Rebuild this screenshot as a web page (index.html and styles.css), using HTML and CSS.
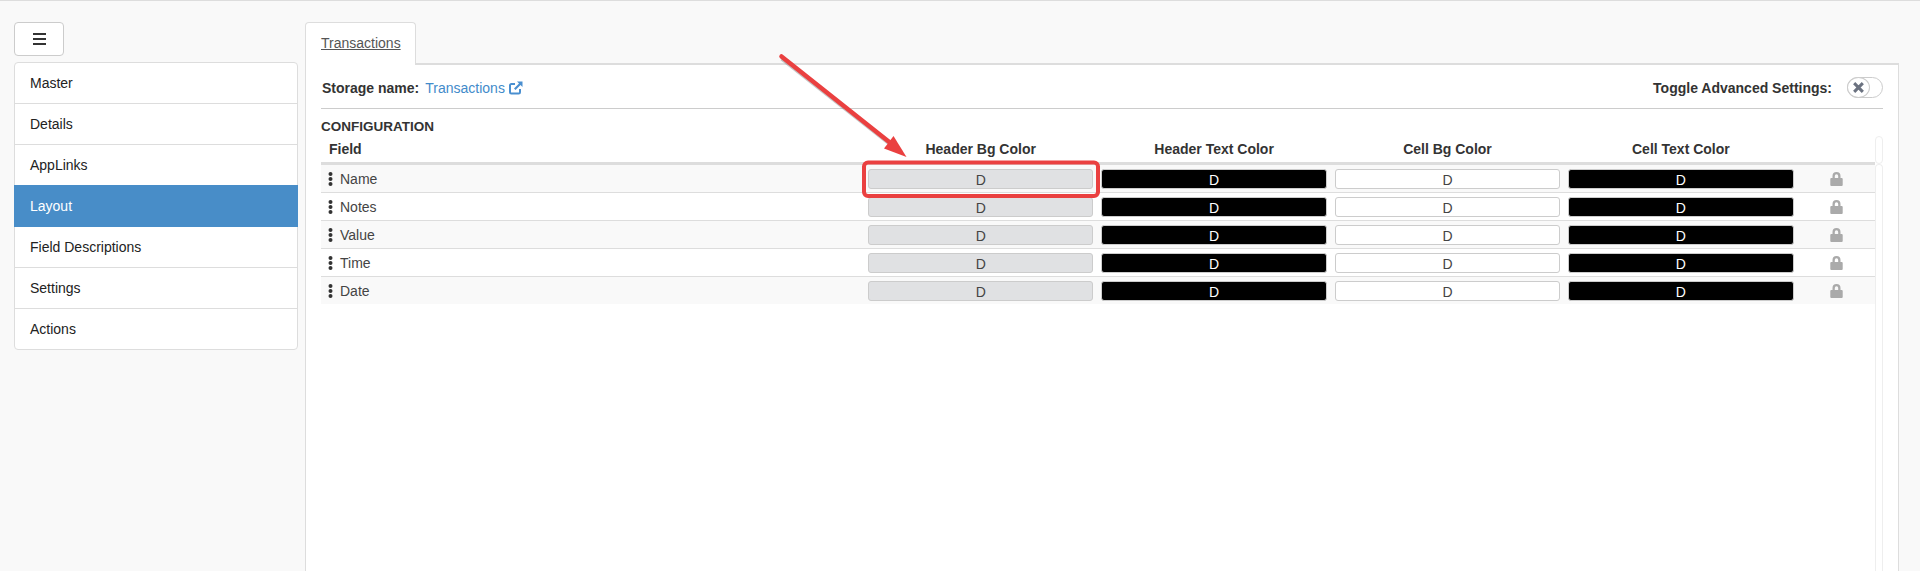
FILE: index.html
```html
<!DOCTYPE html>
<html lang="en">
<head>
<meta charset="utf-8">
<title>Layout</title>
<link rel="stylesheet" href="styles.css">
</head>
<body>
<div class="page">
  <aside class="sidebar">
    <button class="menu-btn" type="button" aria-label="Menu">
      <svg width="13" height="12" viewBox="0 0 13 12"><path d="M0 0h13v2H0zM0 5h13v2H0zM0 10h13v2H0z" fill="#333"/></svg>
    </button>
    <ul class="nav-list">
      <li class="nav-item">Master</li>
      <li class="nav-item">Details</li>
      <li class="nav-item">AppLinks</li>
      <li class="nav-item active">Layout</li>
      <li class="nav-item">Field Descriptions</li>
      <li class="nav-item">Settings</li>
      <li class="nav-item">Actions</li>
    </ul>
  </aside>
  <main class="main">
    <div class="tabs"><a class="tab">Transactions</a></div>
    <section class="panel">
      <div class="storage-row">
        <div class="storage">
          <b>Storage name:</b>
          <a class="storage-link">Transactions</a>
          <svg class="ext-icon" width="14" height="14" viewBox="0 0 14 14"><path d="M11 8v3.2a1.3 1.3 0 0 1-1.3 1.3H2.300a1.300 1.300 0 0 1-1.300-1.300V4.300A1.300 1.300 0 0 1 2.300 3H6" fill="none" stroke="#4a8fd0" stroke-width="2"/><path d="M8 .5h5.500V6l-2-2-5 5-1.500-1.500 5-5z" fill="#4a8fd0"/></svg>
        </div>
        <div class="advanced">
          <b>Toggle Advanced Settings:</b>
          <span class="toggle"><span class="knob"><svg width="13" height="13" viewBox="0 0 12 12"><path d="M2 2l8 8M10 2l-8 8" stroke="#6b7280" stroke-width="2.800"/></svg></span></span>
        </div>
      </div>
      <h4 class="config-title">CONFIGURATION</h4>
      <div class="table-wrap">
        <div class="table">
          <div class="row head">
            <div class="cell field-head">Field</div>
            <div class="cell center">Header Bg Color</div>
            <div class="cell center">Header Text Color</div>
            <div class="cell center">Cell Bg Color</div>
            <div class="cell center">Cell Text Color</div>
            <div class="cell"></div>
          </div>
          <div class="row">
            <div class="cell field"><svg class="dots" width="5" height="14" viewBox="0 0 5 14"><circle cx="2.500" cy="2" r="2"/><circle cx="2.500" cy="7" r="2"/><circle cx="2.500" cy="12" r="2"/></svg>Name</div>
            <div class="cell"><button class="swatch grey" type="button">D</button></div>
            <div class="cell"><button class="swatch black" type="button">D</button></div>
            <div class="cell"><button class="swatch white" type="button">D</button></div>
            <div class="cell"><button class="swatch black" type="button">D</button></div>
            <div class="cell center"><svg class="lock" width="13" height="14" viewBox="0 0 13 14"><path d="M2.500 6V4a4 4 0 0 1 8 0v2h1.200a1 1 0 0 1 1 1v6a1 1 0 0 1-1 1H1.300a1 1 0 0 1-1-1V7a1 1 0 0 1 1-1zm2.300 0h3.400V4a1.700 1.700 0 0 0-3.400 0z"/></svg></div>
          </div>
          <div class="row">
            <div class="cell field"><svg class="dots" width="5" height="14" viewBox="0 0 5 14"><circle cx="2.500" cy="2" r="2"/><circle cx="2.500" cy="7" r="2"/><circle cx="2.500" cy="12" r="2"/></svg>Notes</div>
            <div class="cell"><button class="swatch grey" type="button">D</button></div>
            <div class="cell"><button class="swatch black" type="button">D</button></div>
            <div class="cell"><button class="swatch white" type="button">D</button></div>
            <div class="cell"><button class="swatch black" type="button">D</button></div>
            <div class="cell center"><svg class="lock" width="13" height="14" viewBox="0 0 13 14"><path d="M2.500 6V4a4 4 0 0 1 8 0v2h1.200a1 1 0 0 1 1 1v6a1 1 0 0 1-1 1H1.300a1 1 0 0 1-1-1V7a1 1 0 0 1 1-1zm2.300 0h3.400V4a1.700 1.700 0 0 0-3.400 0z"/></svg></div>
          </div>
          <div class="row">
            <div class="cell field"><svg class="dots" width="5" height="14" viewBox="0 0 5 14"><circle cx="2.500" cy="2" r="2"/><circle cx="2.500" cy="7" r="2"/><circle cx="2.500" cy="12" r="2"/></svg>Value</div>
            <div class="cell"><button class="swatch grey" type="button">D</button></div>
            <div class="cell"><button class="swatch black" type="button">D</button></div>
            <div class="cell"><button class="swatch white" type="button">D</button></div>
            <div class="cell"><button class="swatch black" type="button">D</button></div>
            <div class="cell center"><svg class="lock" width="13" height="14" viewBox="0 0 13 14"><path d="M2.500 6V4a4 4 0 0 1 8 0v2h1.200a1 1 0 0 1 1 1v6a1 1 0 0 1-1 1H1.300a1 1 0 0 1-1-1V7a1 1 0 0 1 1-1zm2.300 0h3.400V4a1.700 1.700 0 0 0-3.400 0z"/></svg></div>
          </div>
          <div class="row">
            <div class="cell field"><svg class="dots" width="5" height="14" viewBox="0 0 5 14"><circle cx="2.500" cy="2" r="2"/><circle cx="2.500" cy="7" r="2"/><circle cx="2.500" cy="12" r="2"/></svg>Time</div>
            <div class="cell"><button class="swatch grey" type="button">D</button></div>
            <div class="cell"><button class="swatch black" type="button">D</button></div>
            <div class="cell"><button class="swatch white" type="button">D</button></div>
            <div class="cell"><button class="swatch black" type="button">D</button></div>
            <div class="cell center"><svg class="lock" width="13" height="14" viewBox="0 0 13 14"><path d="M2.500 6V4a4 4 0 0 1 8 0v2h1.200a1 1 0 0 1 1 1v6a1 1 0 0 1-1 1H1.300a1 1 0 0 1-1-1V7a1 1 0 0 1 1-1zm2.300 0h3.400V4a1.700 1.700 0 0 0-3.400 0z"/></svg></div>
          </div>
          <div class="row">
            <div class="cell field"><svg class="dots" width="5" height="14" viewBox="0 0 5 14"><circle cx="2.500" cy="2" r="2"/><circle cx="2.500" cy="7" r="2"/><circle cx="2.500" cy="12" r="2"/></svg>Date</div>
            <div class="cell"><button class="swatch grey" type="button">D</button></div>
            <div class="cell"><button class="swatch black" type="button">D</button></div>
            <div class="cell"><button class="swatch white" type="button">D</button></div>
            <div class="cell"><button class="swatch black" type="button">D</button></div>
            <div class="cell center"><svg class="lock" width="13" height="14" viewBox="0 0 13 14"><path d="M2.500 6V4a4 4 0 0 1 8 0v2h1.200a1 1 0 0 1 1 1v6a1 1 0 0 1-1 1H1.300a1 1 0 0 1-1-1V7a1 1 0 0 1 1-1zm2.300 0h3.400V4a1.700 1.700 0 0 0-3.400 0z"/></svg></div>
          </div>
        </div>
        <div class="scroll-rail"><span class="rail-cap"></span><span class="rail-bar"></span></div>
      </div>
    </section>
  </main>
</div>
<svg class="annotation" width="1920" height="571" viewBox="0 0 1920 571" aria-hidden="true">
  <path class="arrow-shadow" d="M782 58.500L893 146"/>
  <rect class="callout" x="864" y="162.500" width="234" height="33.500" rx="4"/>
  <path class="arrow-line" d="M781.500 56.500L893 145"/>
  <path class="arrow-head" d="M893.500 136L906.500 157L884 148.500z"/>
</svg>
</body>
</html>
```
FILE: styles.css
```css
* { box-sizing: border-box; }
html, body { margin: 0; height: 571px; overflow: hidden; }
body {
  position: relative;
  background: #f9f9f9;
  border-top: 1px solid #ddd;
  font-family: "Liberation Sans", Arial, sans-serif;
  font-size: 14px;
  line-height: 20px;
  color: #333;
}
.page { display: flex; height: 570px; padding: 21px 21px 0 14px; gap: 7px; }
.sidebar { width: 284px; flex: none; }
.menu-btn {
  display: flex; align-items: center; justify-content: center;
  width: 50px; height: 34px; padding: 0; margin-bottom: 6px;
  background: #fff; border: 1px solid #ccc; border-radius: 4px;
}
.nav-list {
  list-style: none; margin: 0; padding: 0;
  background: #fff; border: 1px solid #ddd; border-radius: 4px;
}
.nav-item {
  height: 41px; padding: 10px 15px;
  color: #222; border-bottom: 1px solid #ddd;
}
.nav-item:last-child { border-bottom: 0; height: 40px; }
.nav-item.active {
  background: #488dc8; border-bottom-color: #488dc8; color: #fff;
  margin: -1px -1px 0; height: 42px; padding: 11px 16px 10px;
}
.main { flex: 1; min-width: 0; display: flex; flex-direction: column; }
.tabs { display: flex; height: 41px; position: relative; z-index: 1; }
.tab {
  width: 111px; height: 43px; padding: 10px 0 0 15px;
  background: #fff; border: 1px solid #ddd; border-bottom: 0; border-radius: 4px 4px 0 0;
  color: #555; text-decoration: underline;
}
.panel {
  flex: 1; min-height: 0; background: #fff; padding: 0 15px;
  border-top: 2px solid #ddd; border-left: 1px solid #ddd; border-right: 1px solid #ddd;
}
.storage-row {
  display: flex; justify-content: space-between; align-items: center;
  height: 44px; padding-top: 2px; border-bottom: 1px solid #ccc;
}
.storage, .advanced { display: flex; align-items: center; }
.storage { padding-left: 1px; }
.storage b { margin-right: 6px; color: #333; }
.storage-link { color: #428bca; margin-right: 4px; }
.ext-icon { display: block; }
.advanced b { margin-right: 15px; }
.toggle { display: block; position: relative; width: 36px; height: 21px; border: 1px solid #ccc; border-radius: 11px; background: #fff; }
.knob { position: absolute; left: -1px; top: -1px; width: 23px; height: 21px; display: flex; align-items: center; justify-content: center; border: 1px solid #ccc; border-radius: 50%; background: #fff; }
.config-title { margin: 8px 0 0; height: 19px; font-size: 13.500px; line-height: 20px; color: #333; font-weight: bold; }
.table-wrap { display: flex; }
.table { width: 1554px; flex: none; }
.row { display: grid; grid-template-columns: 543px repeat(4, 233.400px) 1fr; height: 28px; border-bottom: 1px solid #ddd; align-items: center; }
.row:nth-child(even) { background: #f9f9f9; }
.row:last-child { border-bottom: 0; height: 27px; }
.row.head { height: 29px; border-bottom: 3px solid #ddd; font-weight: bold; align-items: start; }
.row.head .cell { padding: 3px 0 0; line-height: 20px; }
.cell { padding: 0 4px; min-width: 0; }
.center { text-align: center; }
.row.head .field-head { padding-left: 8px; }
.field { display: flex; align-items: center; padding-left: 7px; color: #444; }
.dots { fill: #333; margin-right: 7px; flex: none; }
.swatch {
  display: block; width: 100%; height: 20px; padding: 1px 0 0;
  border: 1px solid #ccc; border-radius: 3px;
  font: 14px/18px "Liberation Sans", Arial, sans-serif;
}
.swatch.grey { background: #e0e1e3; color: #444; }
.swatch.black { background: #000; color: #fff; }
.swatch.white { background: #fff; color: #444; }
.lock { display: block; margin: 0 auto; fill: #aaa; }
.scroll-rail { display: flex; flex-direction: column; width: 8px; flex: none; }
.rail-cap { display: block; height: 28px; border: 1px solid #eee; border-radius: 4px; }
.rail-bar { display: block; height: 430px; border: 1px solid #eee; border-bottom: 0; border-radius: 4px 4px 0 0; }
.annotation { position: absolute; left: 0; top: -1px; pointer-events: none; }
.callout { fill: none; stroke: #ea4040; stroke-width: 4px; }
.arrow-line { fill: none; stroke: #ea4040; stroke-width: 4.500px; stroke-linecap: round; }
.arrow-shadow { fill: none; stroke: #8a8a8a; stroke-width: 4.500px; opacity: .5; }
.arrow-head { fill: #ea4040; }
```
